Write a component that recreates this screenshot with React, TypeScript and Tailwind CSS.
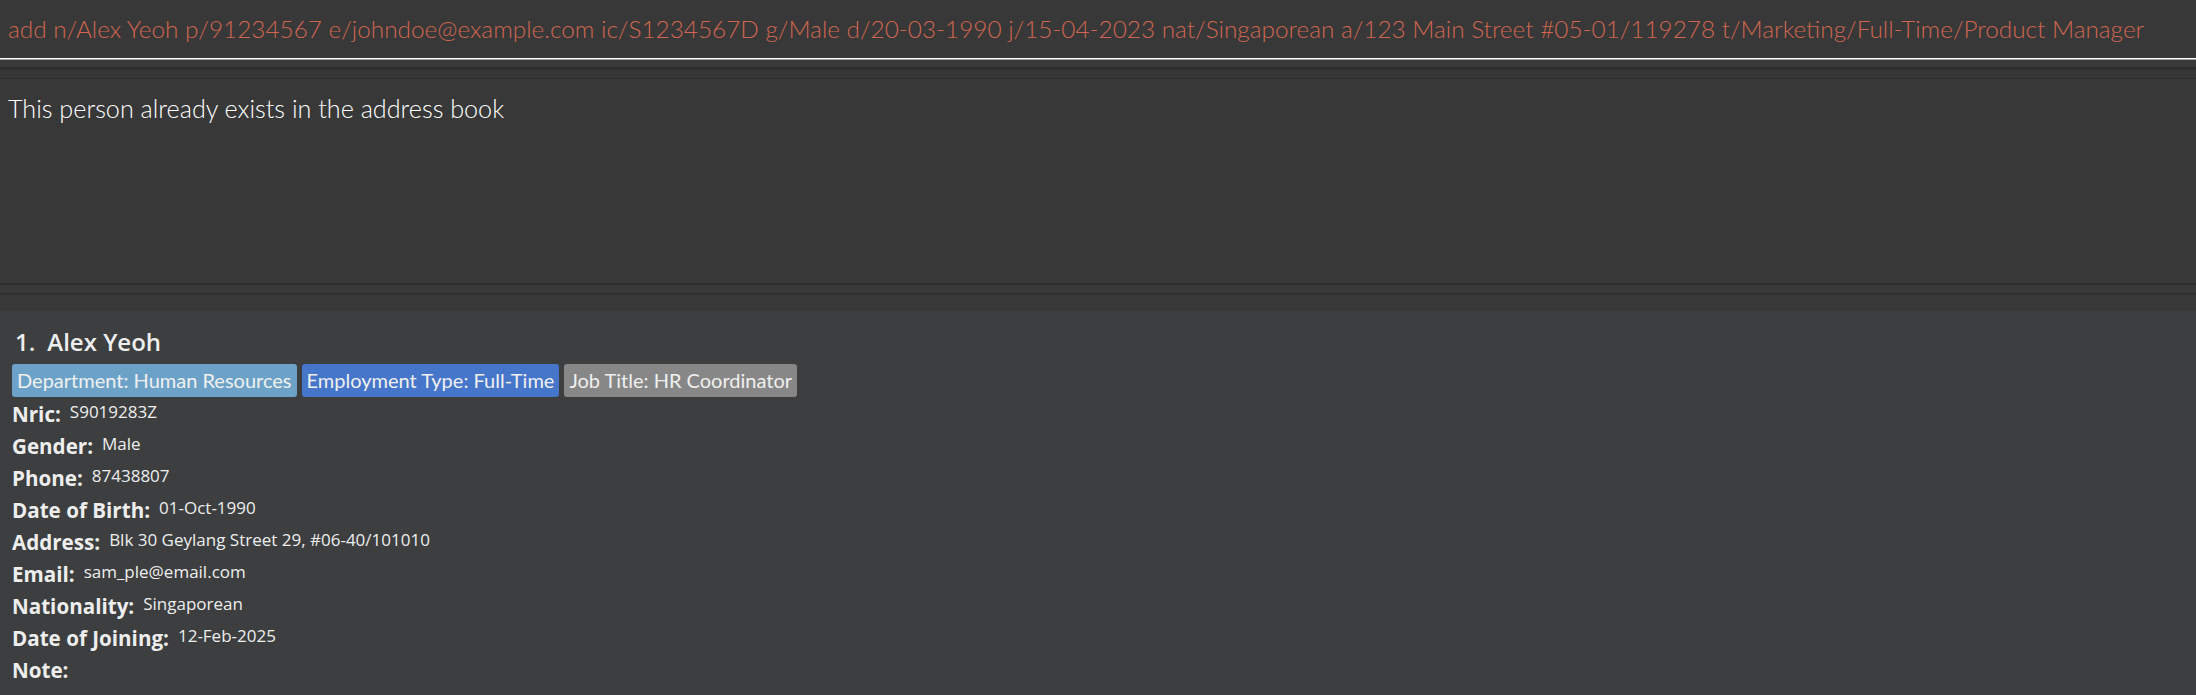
import React from 'react';

const command =
  'add n/Alex Yeoh p/91234567 e/johndoe@example.com ic/S1234567D g/Male d/20-03-1990 j/15-04-2023 nat/Singaporean a/123 Main Street #05-01/119278 t/Marketing/Full-Time/Product Manager';

const tags = [
  { text: 'Department: Human Resources', cls: 'bg-[#6ca2c7]' },
  { text: 'Employment Type: Full-Time', cls: 'bg-[#4676c9]' },
  { text: 'Job Title: HR Coordinator', cls: 'bg-[#878787]' },
];

const fields: [string, string][] = [
  ['Nric:', 'S9019283Z'],
  ['Gender:', 'Male'],
  ['Phone:', '87438807'],
  ['Date of Birth:', '01-Oct-1990'],
  ['Address:', 'Blk 30 Geylang Street 29, #06-40/101010'],
  ['Email:', 'sam_ple@email.com'],
  ['Nationality:', 'Singaporean'],
  ['Date of Joining:', '12-Feb-2025'],
  ['Note:', ''],
];

const App: React.FC = () => {
  return (
    <div className="w-full h-[695px] overflow-hidden bg-[#383838] flex flex-col font-['Lato','Liberation_Sans',sans-serif]">
      {/* command box */}
      <div className="h-[58px] shrink-0 flex items-center px-[8px]">
        <p className="text-[24.35px] leading-[32px] font-light text-[#d06651] whitespace-nowrap">{command}</p>
      </div>
      <div className="h-[1px] shrink-0 bg-white" />
      <div className="h-[1px] shrink-0 bg-[#a0a0a0]" />

      {/* divider */}
      <div className="h-[7px] shrink-0 bg-[#393939]" />
      <div className="h-[3px] shrink-0 bg-[#2d2d2d]" />
      <div className="h-[8px] shrink-0 bg-[#373737]" />
      <div className="h-[1px] shrink-0 bg-[#2d2d2d]" />

      {/* result display */}
      <div className="h-[204px] shrink-0 px-[8px] pt-[13px]">
        <p className="text-[25.2px] leading-[32px] font-light text-white">This person already exists in the address book</p>
      </div>

      {/* divider */}
      <div className="h-[2px] shrink-0 bg-[#2d2d2d]" />
      <div className="h-[8px] shrink-0 bg-[#393939]" />
      <div className="h-[1px] shrink-0 bg-[#2d2d2d]" />
      <div className="h-[17px] shrink-0 bg-[#383838]" />

      {/* person list */}
      <div className="flex-1 bg-[#3c3e3f] pl-[12px] pt-[15px] text-[#eeeeee] font-['Open_Sans','Liberation_Sans',sans-serif]">
        <div className="flex items-baseline text-[24px] leading-[32px] font-semibold">
          <span className="ml-[3px]">1.</span>
          <span className="ml-[12px]">Alex Yeoh</span>
        </div>
        <div className="flex gap-[5px] mt-[6px] font-['Lato','Liberation_Sans',sans-serif]">
          {tags.map(t => (
            <span key={t.text} className={`${t.cls} h-[33px] px-[5px] rounded-[3px] text-[20px] leading-[33px] text-[#f0f0f0]`}>
              {t.text}
            </span>
          ))}
        </div>
        <div className="mt-[1px]">
          {fields.map(([label, value]) => (
            <div key={label} className="flex items-start h-[32px]">
              <span className="text-[20.6px] leading-[32px] font-bold text-[#eeeeee]">{label}</span>
              <span className="ml-[9px] text-[17px] leading-[28px] text-[#eeeeee]">{value}</span>
            </div>
          ))}
        </div>
      </div>
    </div>
  );
};

export default App;
